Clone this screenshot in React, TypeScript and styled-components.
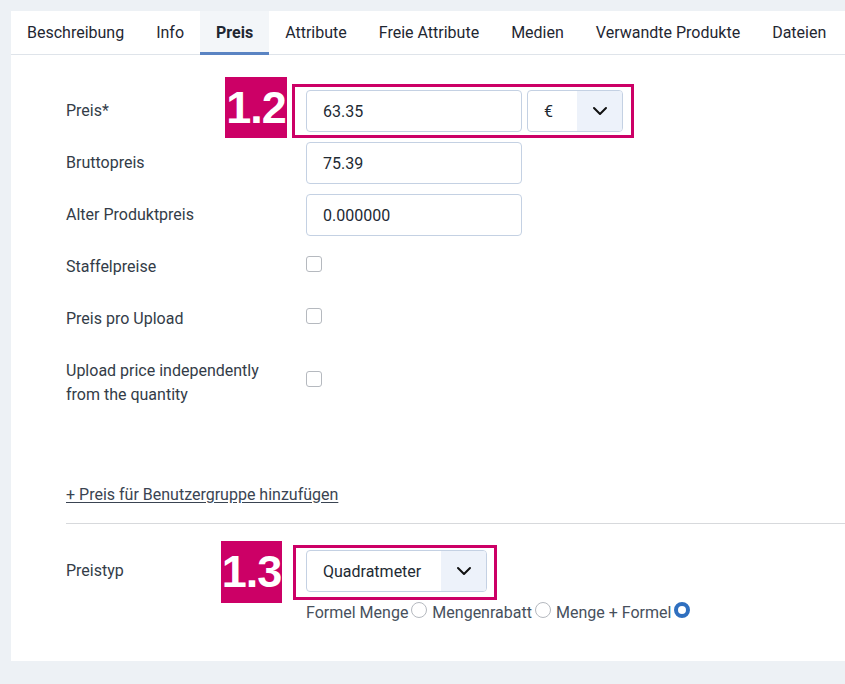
import React from "react";
import styled, { createGlobalStyle } from "styled-components";

const GlobalStyle = createGlobalStyle`
  html, body { margin: 0; padding: 0; }
  body {
    background: #edf1f5;
    font-family: Roboto, "Noto Sans", Arial, sans-serif;
    overflow: hidden;
  }
`;

const Page = styled.div`
  padding: 11px 0 0 11px;
  height: 673px;
  box-sizing: border-box;
`;

const Card = styled.div`
  background: #fff;
  height: 650px;
  display: flex;
  flex-direction: column;
`;

const Tabs = styled.div`
  display: flex;
  height: 43px;
  border-bottom: 1px solid #dfe4ea;
`;

const Tab = styled.div<{ $active?: boolean }>`
  display: flex;
  align-items: center;
  padding: 0 16px 2px;
  font-size: 16px;
  color: #1f2732;
  font-weight: ${(p) => (p.$active ? 700 : 400)};
  background: ${(p) => (p.$active ? "#f3f6f9" : "transparent")};
  box-shadow: ${(p) => (p.$active ? "inset 0 -3px 0 #5a84c3" : "none")};
  margin-bottom: -1px;
  white-space: nowrap;
`;

const Body = styled.div`
  padding: 35px 0 0 55px;
  display: flex;
  flex-direction: column;
`;

const Row = styled.div<{ $gapTop?: number }>`
  position: relative;
  display: grid;
  grid-template-columns: 240px 1fr;
  align-items: center;
  min-height: 42px;
  margin-bottom: 10px;
  margin-top: ${(p) => p.$gapTop ?? 0}px;
`;

const Label = styled.div`
  font-size: 16px;
  line-height: 24px;
  color: #333c48;
`;

const Controls = styled.div`
  display: flex;
  align-items: center;
  gap: 5px;
`;

const Input = styled.div`
  width: 216px;
  height: 42px;
  box-sizing: border-box;
  border: 1px solid #c4d1e3;
  border-radius: 4px;
  padding-left: 16px;
  display: flex;
  align-items: center;
  font-size: 16px;
  color: #222a33;
`;

const Select = styled.div<{ $w: number }>`
  width: ${(p) => p.$w}px;
  height: 42px;
  box-sizing: border-box;
  border: 1px solid #c4d1e3;
  border-radius: 4px;
  display: flex;
  overflow: hidden;
  font-size: 16px;
  color: #222a33;
`;

const SelectText = styled.div`
  flex: 1;
  display: flex;
  align-items: center;
  padding-left: 16px;
`;

const SelectArrow = styled.div`
  width: 45px;
  background: #edf2fa;
  display: flex;
  align-items: center;
  justify-content: center;
`;

const Checkbox = styled.div`
  width: 16px;
  height: 16px;
  box-sizing: border-box;
  border: 1px solid #b5b9bf;
  border-radius: 3px;
  background: #fff;
`;

const CheckCell = styled.div<{ $offset?: number }>`
  display: flex;
  align-items: center;
  margin-top: ${(p) => p.$offset ?? 0}px;
`;

const LinkText = styled.a`
  font-size: 16px;
  line-height: 24px;
  color: #3a4452;
  text-decoration: underline;
  text-underline-offset: 2px;
  margin-top: 66px;
  align-self: flex-start;
  cursor: pointer;
`;

const Divider = styled.hr`
  border: none;
  border-top: 1px solid #d7d9dc;
  margin: 16px 0 26px 0;
  width: 100%;
`;

const RadioLine = styled.div`
  grid-column: 2;
  display: flex;
  align-items: center;
  font-size: 16px;
  color: #47505c;
  margin-top: 11px;
`;

const RadioText = styled.span`
  margin-right: 3px;
`;

const Radio = styled.span<{ $checked?: boolean }>`
  display: inline-block;
  width: 16px;
  height: 16px;
  box-sizing: border-box;
  border-radius: 50%;
  border: ${(p) => (p.$checked ? "4.5px solid #2f6fbf" : "1px solid #b5b9bf")};
  background: #fff;
  margin-right: 5px;
  position: relative;
  top: -3px;
`;

const Badge = styled.div<{ $l: number; $t: number; $w: number; $h: number }>`
  position: absolute;
  left: ${(p) => p.$l}px;
  top: ${(p) => p.$t}px;
  width: ${(p) => p.$w}px;
  height: ${(p) => p.$h}px;
  background: #cc0066;
  color: #fff;
  font-family: "Liberation Sans", Arial, sans-serif;
  font-weight: 700;
  font-size: 45px;
  display: flex;
  align-items: center;
  justify-content: center;
  letter-spacing: -1px;
`;

const Outline = styled.div<{ $l: number; $t: number; $w: number; $h: number }>`
  position: absolute;
  left: ${(p) => p.$l}px;
  top: ${(p) => p.$t}px;
  width: ${(p) => p.$w}px;
  height: ${(p) => p.$h}px;
  box-sizing: border-box;
  border: 3px solid #cc0066;
  pointer-events: none;
`;

const Chevron = () => (
  <svg width="16" height="10" viewBox="0 0 16 10" fill="none">
    <path d="M2 2 L8 8 L14 2" stroke="#111" strokeWidth="2" strokeLinecap="round" strokeLinejoin="round" />
  </svg>
);

const tabs = [
  "Beschreibung",
  "Info",
  "Preis",
  "Attribute",
  "Freie Attribute",
  "Medien",
  "Verwandte Produkte",
  "Dateien",
];

export default function App() {
  return (
    <>
      <GlobalStyle />
      <Page>
        <Card>
          <Tabs>
            {tabs.map((t) => (
              <Tab key={t} $active={t === "Preis"}>
                {t}
              </Tab>
            ))}
          </Tabs>
          <Body>
            <Row>
              <Label>Preis*</Label>
              <Controls>
                <Input>63.35</Input>
                <Select $w={96}>
                  <SelectText>€</SelectText>
                  <SelectArrow>
                    <Chevron />
                  </SelectArrow>
                </Select>
              </Controls>
              <Badge $l={159} $t={-13} $w={62} $h={61}>1.2</Badge>
              <Outline $l={226} $t={-6} $w={342} $h={54} />
            </Row>
            <Row>
              <Label>Bruttopreis</Label>
              <Controls>
                <Input>75.39</Input>
              </Controls>
            </Row>
            <Row>
              <Label>Alter Produktpreis</Label>
              <Controls>
                <Input>0.000000</Input>
              </Controls>
            </Row>
            <Row>
              <Label>Staffelpreise</Label>
              <CheckCell $offset={-6}>
                <Checkbox />
              </CheckCell>
            </Row>
            <Row>
              <Label>Preis pro Upload</Label>
              <CheckCell $offset={-6}>
                <Checkbox />
              </CheckCell>
            </Row>
            <Row $gapTop={9}>
              <Label>
                Upload price independently
                <br />
                from the quantity
              </Label>
              <CheckCell $offset={-9}>
                <Checkbox />
              </CheckCell>
            </Row>
            <LinkText>+ Preis für Benutzergruppe hinzufügen</LinkText>
            <Divider />
            <Row>
              <Label>Preistyp</Label>
              <Controls>
                <Select $w={181}>
                  <SelectText>Quadratmeter</SelectText>
                  <SelectArrow>
                    <Chevron />
                  </SelectArrow>
                </Select>
              </Controls>
              <Badge $l={155} $t={-9} $w={61} $h={62}>1.3</Badge>
              <Outline $l={227} $t={-5} $w={204} $h={55} />
              <RadioLine>
                <RadioText>Formel Menge</RadioText>
                <Radio />
                <RadioText>Mengenrabatt</RadioText>
                <Radio />
                <RadioText>Menge + Formel</RadioText>
                <Radio $checked />
              </RadioLine>
            </Row>
          </Body>
        </Card>
      </Page>
    </>
  );
}
